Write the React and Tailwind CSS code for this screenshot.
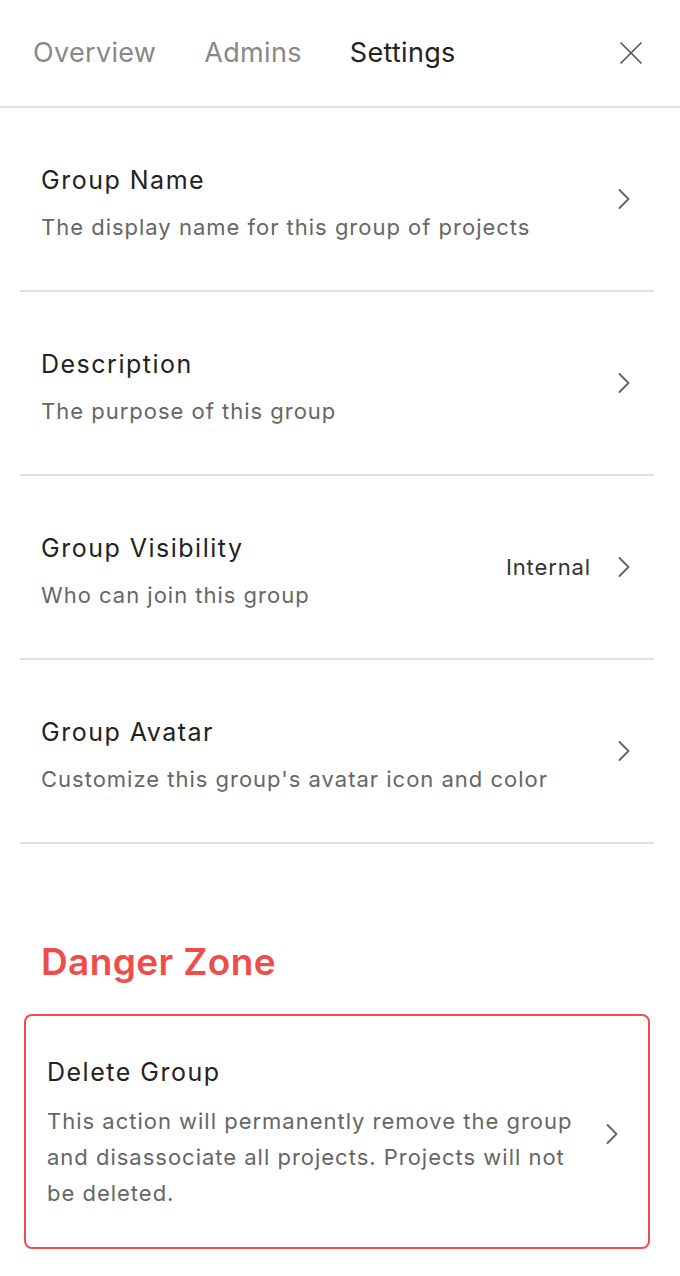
import { ChevronRight, X } from "lucide-react";

const ROWS = [
  { title: "Group Name", sub: "The display name for this group of projects" },
  { title: "Description", sub: "The purpose of this group" },
  { title: "Group Visibility", sub: "Who can join this group", value: "Internal" },
  { title: "Group Avatar", sub: "Customize this group's avatar icon and color" },
];

const TABS = ["Overview", "Admins", "Settings"];

export default function App() {
  return (
    <div
      className="w-[680px] min-h-[1276px] bg-white text-[#222]"
      style={{ fontFamily: "Inter, 'Noto Sans', sans-serif" }}
    >
      {/* Tabs */}
      <div className="flex items-center h-[108px] pl-[33px] pr-[29px] border-b-2 border-[#dde3ec]">
        <div className="flex gap-[48px] flex-1 tracking-[0.02em]">
          {TABS.map((t) => (
            <span
              key={t}
              className={
                t === "Settings"
                  ? "text-[27px] text-[#222]"
                  : "text-[27px] text-[#888]"
              }
            >
              {t}
            </span>
          ))}
        </div>
        <X className="w-[40px] h-[40px] text-[#555]" strokeWidth={1} />
      </div>

      {/* Settings rows */}
      <div className="pl-[20px] pr-[26px]">
        {ROWS.map((r) => (
          <div
            key={r.title}
            className="flex items-center h-[184px] pl-[21px] pr-[12px] border-b-2 border-[#dbe2ea]"
          >
            <div className="flex-1 pt-[8px]">
              <div className="text-[25px] leading-[32px] text-[#222] tracking-[0.06em]">{r.title}</div>
              <div className="text-[22px] leading-[30px] text-[#666] mt-[16px] tracking-[0.045em]">{r.sub}</div>
            </div>
            {r.value && (
              <span className="text-[22px] text-[#333] mr-[15px] tracking-[0.04em]">{r.value}</span>
            )}
            <ChevronRight className="w-[36px] h-[36px] text-[#666]" strokeWidth={1.3} />
          </div>
        ))}

        {/* Danger zone */}
        <h2 className="text-[37px] font-semibold text-[#ef4c4c] pl-[21px] mt-[96px] leading-[44px] tracking-[0.01em]">
          Danger Zone
        </h2>
        <div className="mx-[4px] mt-[30px] border-2 border-[#ef4c4c] rounded-[8px] flex items-center pl-[21px] pr-[18px] pt-[40px] pb-[36px]">
          <div className="flex-1 pr-[12px]">
            <div className="text-[25px] leading-[32px] text-[#222] tracking-[0.06em]">Delete Group</div>
            <div className="text-[22px] leading-[36px] text-[#666] mt-[15px] tracking-[0.045em]">
              This action will permanently remove the group and disassociate all
              projects. Projects will not be deleted.
            </div>
          </div>
          <ChevronRight className="w-[36px] h-[36px] text-[#666]" strokeWidth={1.3} />
        </div>
      </div>
    </div>
  );
}
